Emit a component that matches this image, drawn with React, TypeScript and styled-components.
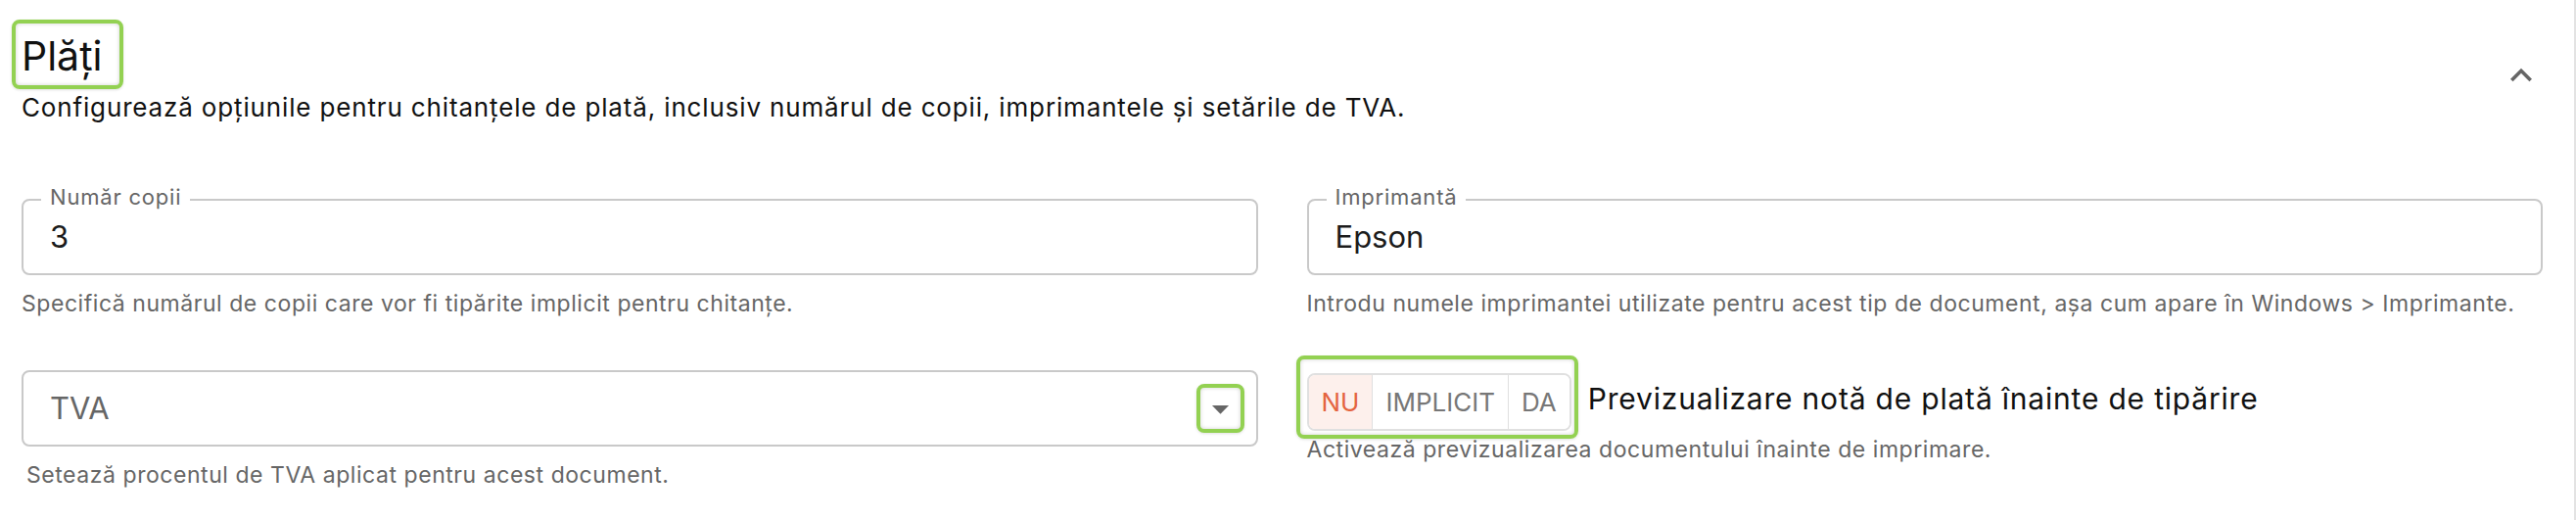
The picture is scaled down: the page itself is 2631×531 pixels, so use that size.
import React from 'react';
import styled, { createGlobalStyle, css } from 'styled-components';

const GlobalStyle = createGlobalStyle`
  html, body { margin: 0; padding: 0; background: #fff; }
  body {
    font-family: Inter, "Noto Sans", sans-serif;
    color: #111;
  }
  *, *::before, *::after { box-sizing: border-box; }
`;

const highlight = (inset: string) => css`
  position: relative;
  &::after {
    content: '';
    position: absolute;
    inset: ${inset};
    border: 4px solid #93d152;
    border-radius: 8px;
    box-shadow: inset 0 0 4px rgba(0, 0, 0, 0.18), 0 1px 3px rgba(0, 0, 0, 0.12);
    pointer-events: none;
  }
`;

const Page = styled.div`
  width: 2631px;
  min-height: 531px;
  padding: 0 32px 0 22px;
  border-right: 2px solid #e3e3e3;
`;

const Header = styled.header`
  display: flex;
  justify-content: space-between;
  align-items: flex-start;
`;

const HeaderText = styled.div`
  padding-top: 33px;
`;

const Title = styled.h2`
  display: inline-block;
  margin: 0;
  font-size: 41px;
  line-height: 48px;
  font-weight: 400;
  color: #111;
  ${highlight('-13px -22px -10px -10px')}
`;

const Description = styled.p`
  margin: 13px 0 0;
  font-size: 26px;
  line-height: 32px;
  letter-spacing: 0.85px;
  color: #111;
`;

const CollapseButton = styled.button`
  margin-top: 55px;
  width: 44px;
  height: 44px;
  padding: 0;
  border: 0;
  background: none;
  color: #666;
  display: flex;
  cursor: pointer;
`;

const Grid = styled.div`
  display: grid;
  grid-template-columns: 1fr 1fr;
  column-gap: 50px;
  row-gap: 53px;
  margin-top: 77px;
`;

const Field = styled.div`
  display: flex;
  flex-direction: column;
`;

const OutlinedBox = styled.div`
  position: relative;
  height: 78px;
  border: 2px solid #c9c9c9;
  border-radius: 8px;
  display: flex;
  align-items: center;
  justify-content: space-between;
  padding: 0 12px 0 27px;
`;

const FloatingLabel = styled.span`
  position: absolute;
  left: 18px;
  top: -17px;
  padding: 0 9px;
  background: #fff;
  font-size: 22px;
  line-height: 26px;
  letter-spacing: 0.8px;
  color: #666;
`;

const Value = styled.span<{ $muted?: boolean }>`
  font-size: 31px;
  line-height: 1.2;
  color: ${(p) => (p.$muted ? '#666' : '#1c1c1c')};
`;

const Helper = styled.div<{ $top: number; $indent?: number }>`
  margin-top: ${(p) => p.$top}px;
  padding-left: ${(p) => p.$indent ?? 0}px;
  font-size: 23px;
  line-height: 30px;
  letter-spacing: 0.55px;
  color: #666;
`;

const DropButton = styled.span`
  width: 49px;
  height: 50px;
  border: 4px solid #93d152;
  border-radius: 8px;
  box-shadow: inset 0 0 4px rgba(0, 0, 0, 0.18), 0 1px 3px rgba(0, 0, 0, 0.12);
  display: flex;
  align-items: center;
  justify-content: center;
  color: #666;
  background: #fff;
`;

const ToggleRow = styled.div`
  margin-top: 3px;
  display: flex;
  align-items: center;
  gap: 17px;
`;

const ToggleGroup = styled.div`
  display: flex;
  height: 59px;
  border: 2px solid #e0e0e0;
  border-radius: 8px;
  ${highlight('-20px -9px -10px -13px')}
`;

const Segment = styled.span<{ $active?: boolean }>`
  display: flex;
  align-items: center;
  padding: 0 13px;
  font-size: 26px;
  color: ${(p) => (p.$active ? '#e4643f' : '#777')};
  background: ${(p) => (p.$active ? '#fdf0ec' : '#fff')};
  & + & {
    border-left: 1.5px solid #e0e0e0;
  }
  &:first-child {
    border-radius: 6px 0 0 6px;
  }
  &:last-child {
    border-radius: 0 6px 6px 0;
  }
`;

const ToggleLabel = styled.span`
  font-size: 30px;
  line-height: 36px;
  letter-spacing: 0.8px;
  padding-bottom: 8px;
  color: #111;
`;

export default function App() {
  return (
    <>
      <GlobalStyle />
      <Page>
        <Header>
          <HeaderText>
            <Title>Plăți</Title>
            <Description>
              Configurează opțiunile pentru chitanțele de plată, inclusiv numărul de copii, imprimantele și setările de TVA.
            </Description>
          </HeaderText>
          <CollapseButton aria-label="Restrânge">
            <svg width="44" height="44" viewBox="0 0 24 24" fill="currentColor">
              <path d="M12 8l-6 6 1.41 1.41L12 10.83l4.59 4.58L18 14z" />
            </svg>
          </CollapseButton>
        </Header>

        <Grid>
          <Field>
            <OutlinedBox>
              <FloatingLabel>Număr copii</FloatingLabel>
              <Value>3</Value>
            </OutlinedBox>
            <Helper $top={14}>Specifică numărul de copii care vor fi tipărite implicit pentru chitanțe.</Helper>
          </Field>

          <Field>
            <OutlinedBox>
              <FloatingLabel>Imprimantă</FloatingLabel>
              <Value>Epson</Value>
            </OutlinedBox>
            <Helper $top={14}>
              Introdu numele imprimantei utilizate pentru acest tip de document, așa cum apare în Windows &gt; Imprimante.
            </Helper>
          </Field>

          <Field>
            <OutlinedBox>
              <Value $muted>TVA</Value>
              <DropButton>
                <svg width="43" height="43" viewBox="0 0 24 24" fill="currentColor">
                  <path d="M7 10l5 5 5-5z" />
                </svg>
              </DropButton>
            </OutlinedBox>
            <Helper $top={14} $indent={5}>Setează procentul de TVA aplicat pentru acest document.</Helper>
          </Field>

          <Field>
            <ToggleRow>
              <ToggleGroup>
                <Segment $active>NU</Segment>
                <Segment>IMPLICIT</Segment>
                <Segment>DA</Segment>
              </ToggleGroup>
              <ToggleLabel>Previzualizare notă de plată înainte de tipărire</ToggleLabel>
            </ToggleRow>
            <Helper $top={4}>Activează previzualizarea documentului înainte de imprimare.</Helper>
          </Field>
        </Grid>
      </Page>
    </>
  );
}
